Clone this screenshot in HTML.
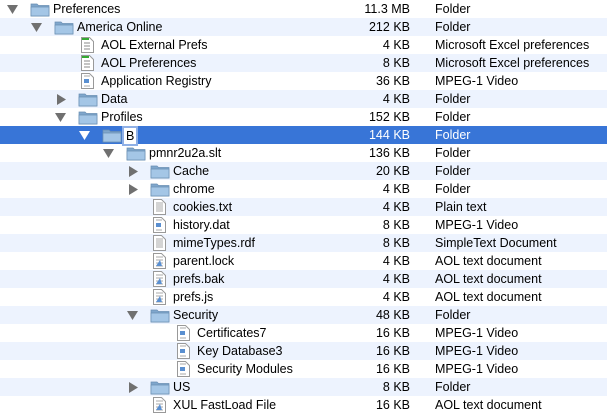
<!DOCTYPE html>
<html><head><style>
body{margin:0;width:607px;height:415px;overflow:hidden;background:#fff;font-family:"Liberation Sans",sans-serif;font-size:12.5px;color:#000}
.r{position:absolute;left:0;width:607px;height:18px}
.r.a{background:#edf3fe}
.r.s{background:#3875d7;color:#fff}
.r span{position:absolute;top:2px;white-space:nowrap}
.sz{right:197px;text-align:right}
.k{left:435px}
svg{position:absolute}
</style></head><body>
<div id="c"></div>
<script>
const F='<svg width="20" height="15" viewBox="0 0 20 15" style="top:2px;left:XXpx"><path d="M1 2h6l1.5 1.5H19V14H1z" fill="#7fa6cc" stroke="#6a8fb3" stroke-width=".7"/><path d="M1 5h18v9H1z" fill="#a4c6e6" stroke="#6a8fb3" stroke-width=".7"/></svg>';
const D=(m)=>'<svg width="13" height="16" viewBox="0 0 13 16" style="top:1px;left:XXpx"><path d="M.5.5h8l4 4v11H.5z" fill="#fff" stroke="#999"/>'+m+'</svg>';
const ic={F:F,
X:D('<rect x="1" y="1" width="7" height="2" fill="#3a3"/><path d="M3 6h6M3 9h6M3 12h6" stroke="#888"/>'),
V:D('<path d="M3 3h6M3 13h6" stroke="#aaa"/><rect x="3" y="6" width="5" height="4" fill="#5a8fd0"/>'),
T:D('<path d="M3 4h7M3 6h7M3 8h7M3 10h7M3 12h7" stroke="#aaa"/>'),
A:D('<path d="M3 4h7M3 7h7M3 10h7M3 13h7" stroke="#aaa"/><path d="M3 13l4-6 2 6z" fill="#5a8fd0"/>')};
const rows=[
[0,'o','F','Preferences','11.3 MB','Folder'],
[1,'o','F','America Online','212 KB','Folder'],
[2,'','X','AOL External Prefs','4 KB','Microsoft Excel preferences'],
[2,'','X','AOL Preferences','8 KB','Microsoft Excel preferences'],
[2,'','V','Application Registry','36 KB','MPEG-1 Video'],
[2,'c','F','Data','4 KB','Folder'],
[2,'o','F','Profiles','152 KB','Folder'],
[3,'o','F','B','144 KB','Folder'],
[4,'o','F','pmnr2u2a.slt','136 KB','Folder'],
[5,'c','F','Cache','20 KB','Folder'],
[5,'c','F','chrome','4 KB','Folder'],
[5,'','T','cookies.txt','4 KB','Plain text'],
[5,'','V','history.dat','8 KB','MPEG-1 Video'],
[5,'','T','mimeTypes.rdf','8 KB','SimpleText Document'],
[5,'','A','parent.lock','4 KB','AOL text document'],
[5,'','A','prefs.bak','4 KB','AOL text document'],
[5,'','A','prefs.js','4 KB','AOL text document'],
[5,'o','F','Security','48 KB','Folder'],
[6,'','V','Certificates7','16 KB','MPEG-1 Video'],
[6,'','V','Key Database3','16 KB','MPEG-1 Video'],
[6,'','V','Security Modules','16 KB','MPEG-1 Video'],
[5,'c','F','US','8 KB','Folder'],
[5,'','A','XUL FastLoad File','16 KB','AOL text document']];
let h='';
rows.forEach((r,i)=>{
 const [L,t,k,n,s,kd]=r;const sel=i==7;
 const cls='r'+(sel?' s':(i%2?' a':''));
 const tc=sel?'#fff':'#707070';
 let tri='';
 if(t=='o')tri=`<svg width="11" height="9" style="top:5px;left:${7+24*L}px"><path d="M0 0h11L5.5 9z" fill="${tc}"/></svg>`;
 if(t=='c')tri=`<svg width="9" height="11" style="top:4px;left:${9+24*L}px"><path d="M0 0v11L9 5.5z" fill="${tc}"/></svg>`;
 const ix=k=='F'?30+24*L:33+24*L;
 let name=sel?`<span style="left:${53+24*L-3}px;top:0;background:#fff;color:#000;padding:1px 2px;border:2px solid #8fb0e6;height:14px;line-height:14px">${n}</span>`:`<span style="left:${53+24*L}px">${n}</span>`;
 h+=`<div class="${cls}" style="top:${i*18}px">${tri}${ic[k].replace('XX',ix)}${name}<span class="sz">${s}</span><span class="k">${kd}</span></div>`;
});
document.getElementById('c').innerHTML=h;
</script>
</body></html>
